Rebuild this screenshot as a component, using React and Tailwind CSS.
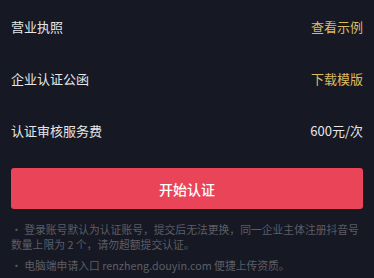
import React from 'react';

const rows = [
    { label: '营业执照', value: '查看示例', link: true },
    { label: '企业认证公函', value: '下载模版', link: true },
    { label: '认证审核服务费', value: '600元/次', link: false },
];

const App = () => {
    return (
        <div
            className="w-[374px] h-[278px] overflow-hidden bg-[#161823] px-[11px]"
            style={{ fontFamily: '"Noto Sans CJK SC", "Noto Sans", sans-serif' }}
        >
            {/* Info rows */}
            <div>
                {rows.map((r) => (
                    <div key={r.label} className="h-[52px] flex items-center justify-between text-[13px] leading-none">
                        <span className="text-[#e6e6e8]">{r.label}</span>
                        <span className={r.link ? 'text-[#dcba62]' : 'text-[#e6e6e8]'}>{r.value}</span>
                    </div>
                ))}
            </div>

            {/* Submit */}
            <button className="mt-3 w-full h-[41px] rounded-[3px] bg-[#ea4459] text-white text-[14px] font-medium leading-none flex items-center justify-center">
                开始认证
            </button>

            {/* Notes */}
            <div className="mt-[13px] text-[10.8px] leading-[15px] text-[#5c5e66]">
                <p>· 登录账号默认为认证账号，提交后无法更换，同一企业主体注册抖音号数量上限为 2 个，请勿超额提交认证。</p>
                <p className="mt-[6px]">· 电脑端申请入口 renzheng.douyin.com 便捷上传资质。</p>
            </div>
        </div>
    );
};

export default App;
